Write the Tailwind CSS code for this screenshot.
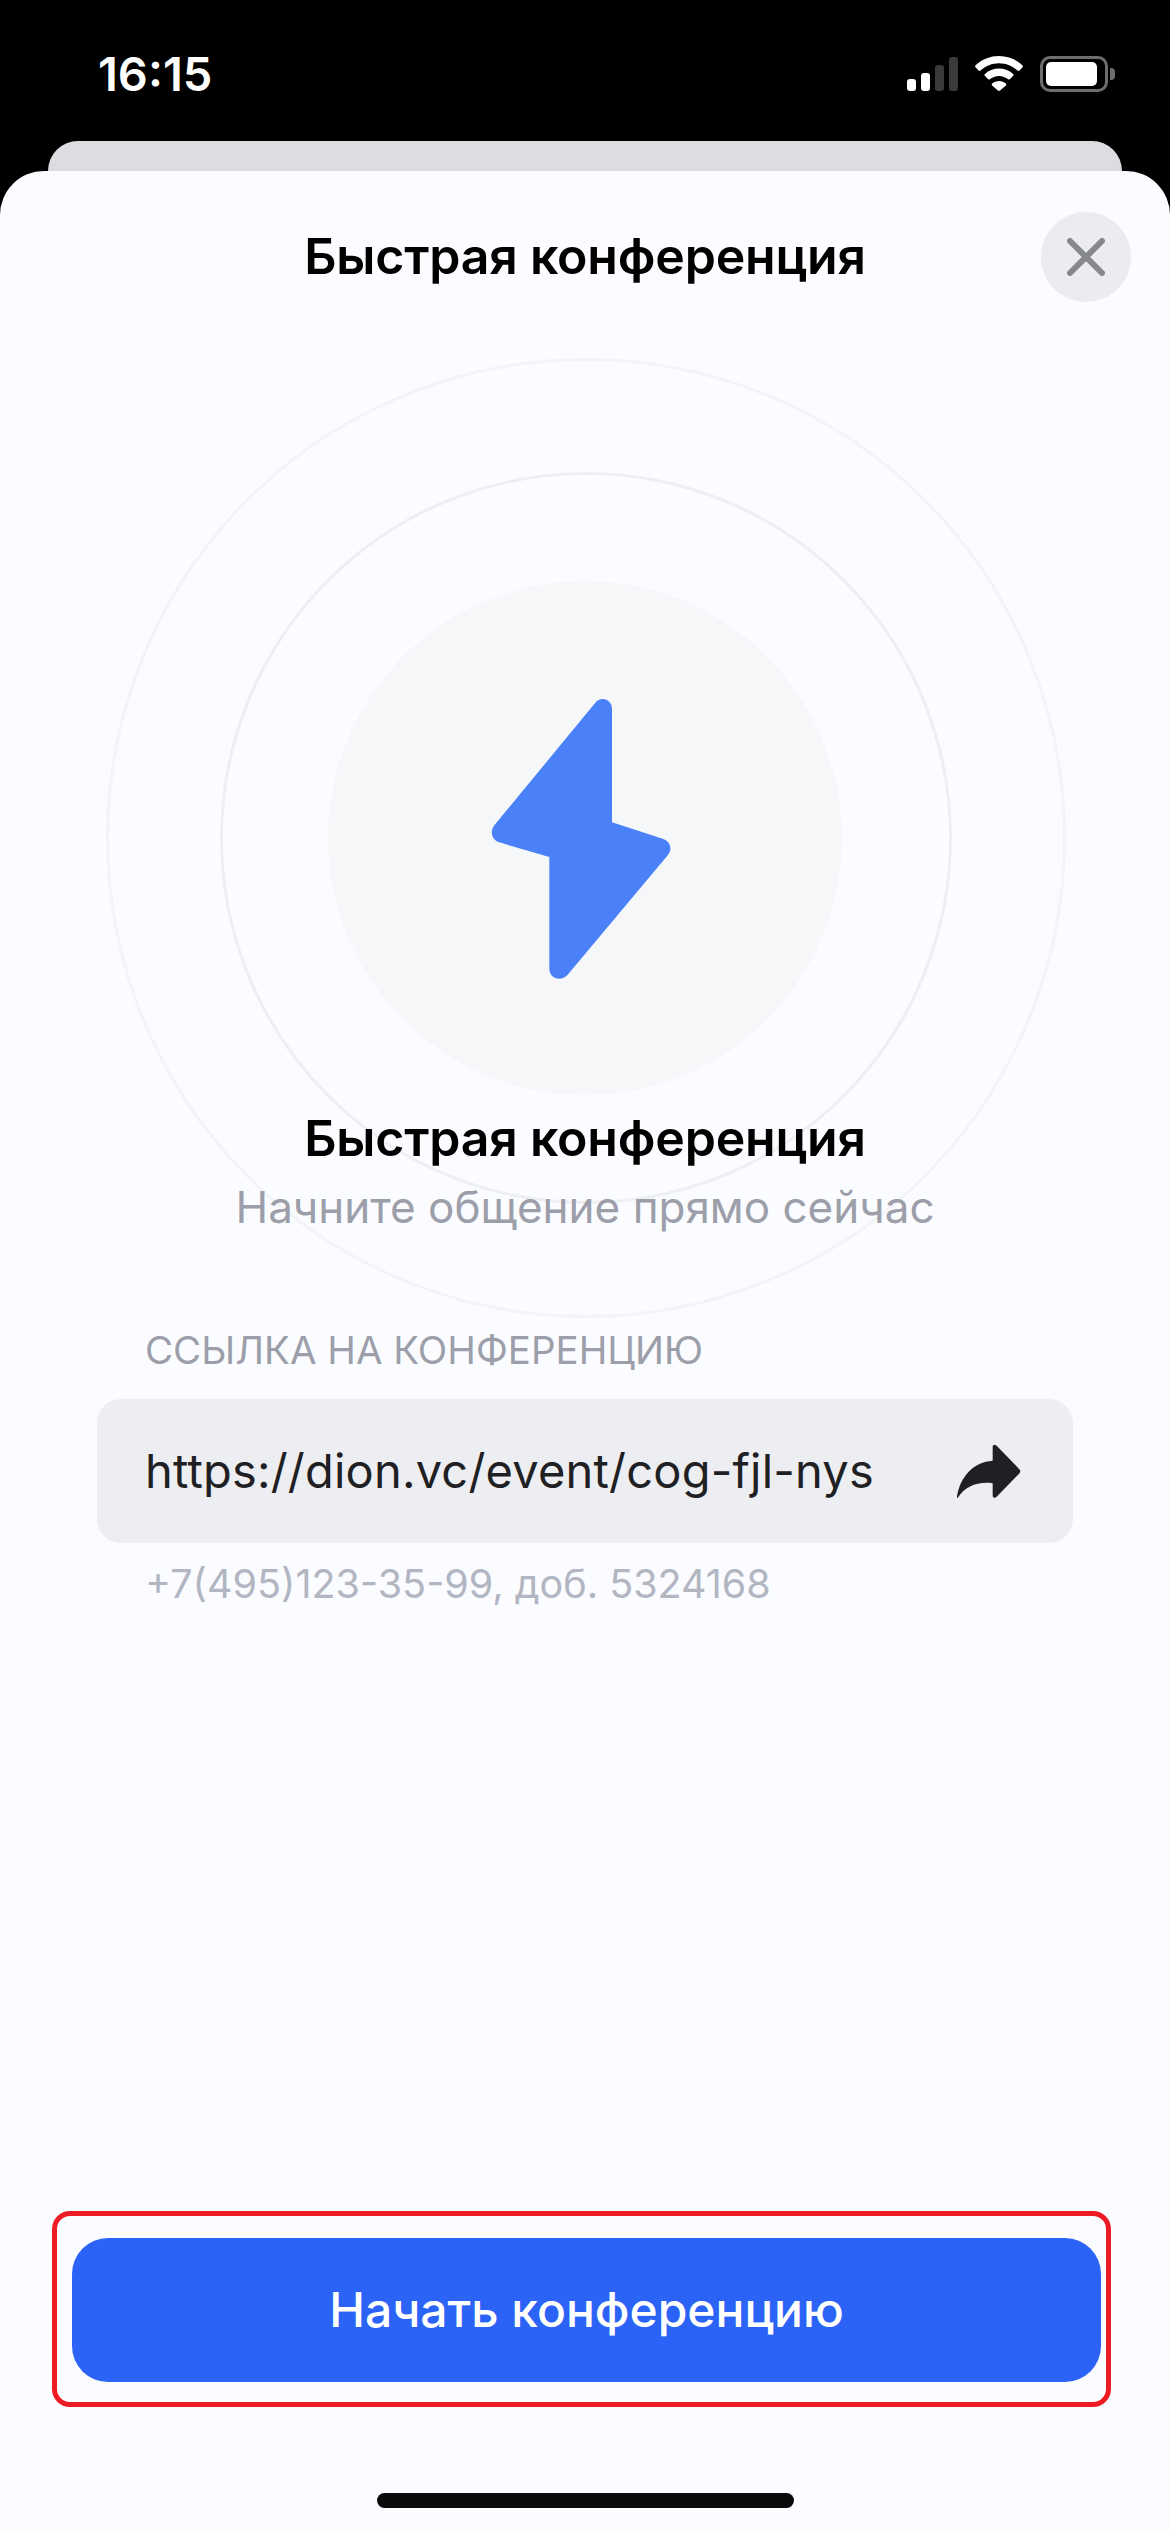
<!DOCTYPE html>
<html lang="ru">
<head>
  <meta charset="UTF-8" />
  <meta name="viewport" content="width=device-width, initial-scale=1" />
  <title>Быстрая конференция</title>
  <script src="https://cdn.jsdelivr.net/npm/@tailwindcss/browser@4"></script>
</head>
<body class="bg-black font-['Inter',sans-serif] w-[1170px] h-[2532px] overflow-hidden">
  <!-- status bar -->
  <div class="h-[141px] relative text-white">
    <span class="absolute left-[98px] top-[50px] text-[47px] leading-[48px] font-semibold">16:15</span>
    <div class="absolute left-[907px] top-[57px] flex items-end gap-[5px] h-[34px]">
      <div class="w-[9px] h-[12px] rounded-[3px] bg-white"></div>
      <div class="w-[9px] h-[18px] rounded-[3px] bg-white"></div>
      <div class="w-[9px] h-[26px] rounded-[3px] bg-[#3a3a3c]"></div>
      <div class="w-[9px] h-[34px] rounded-[3px] bg-[#3a3a3c]"></div>
    </div>
    <svg class="absolute left-[975px] top-[56px]" width="48" height="35" viewBox="0 0 48 35">
      <path d="M24 0C15 0 6.900 3.400 .6 9.200c-.7.6-.7 1.400-.1 2l3 3.300c.6.600 1.400.6 2 .1C10.500 10 17 7.300 24 7.300s13.500 2.700 18.500 7.300c.6.500 1.400.5 2-.1l3-3.300c.6-.6.600-1.400-.1-2C41.100 3.400 33 0 24 0z" fill="#fff"/>
      <path d="M24 12.500c-5.400 0-10.300 2-14.100 5.400-.6.500-.6 1.300-.1 1.900l3.100 3.300c.5.600 1.300.6 1.900.2 2.500-2 5.700-3.300 9.200-3.300s6.700 1.300 9.200 3.300c.6.400 1.400.4 1.900-.2l3.100-3.300c.5-.6.500-1.400-.1-1.900-3.800-3.400-8.700-5.400-14.100-5.400z" fill="#fff"/>
      <path d="M24 25c-2.600 0-5 .9-6.800 2.500-.6.500-.6 1.300-.1 1.900l5.800 5.100c.6.600 1.600.6 2.200 0l5.800-5.100c.5-.6.500-1.400-.1-1.900C29 25.900 26.600 25 24 25z" fill="#fff"/>
    </svg>
    <div class="absolute left-[1040px] top-[56px] w-[68px] h-[36px] rounded-[10px] border-[3px] border-[#6e6e70] p-[3px]">
      <div class="w-[51px] h-full rounded-[5px] bg-white"></div>
    </div>
    <div class="absolute left-[1110px] top-[68px] w-[5px] h-[12px] rounded-r-[4px] bg-[#6e6e70]"></div>
  </div>

  <!-- card behind the sheet -->
  <div class="mx-[48px] w-[1074px] h-[60px] rounded-t-[30px] bg-[#dcdde0]"></div>

  <!-- sheet -->
  <div class="relative -mt-[30px] h-[2361px] rounded-t-[44px] bg-[#fbfcff] flex flex-col overflow-hidden">
    <!-- rings -->
    <div class="absolute left-[106px] top-[187px] w-[960px] h-[960px] rounded-full border-[3px] border-[#f3f4f7]"></div>
    <div class="absolute left-[220px] top-[301px] w-[732px] h-[732px] rounded-full border-[3px] border-[#eeeff3]"></div>

    <div class="relative h-[170px] flex items-center justify-center">
      <h1 class="text-[50px] leading-[60px] font-semibold tracking-[-0.2px] text-black">Быстрая конференция</h1>
      <button class="absolute left-[1041px] top-[41px] w-[90px] h-[90px] rounded-full bg-[#ebecef] flex items-center justify-center">
        <svg width="38" height="38" viewBox="0 0 38 38"><path d="M3 3l32 32M35 3L3 35" stroke="#86888e" stroke-width="6" stroke-linecap="round"/></svg>
      </button>
    </div>

    <div class="relative mt-[240px] w-[514px] h-[514px] mx-auto rounded-full bg-[#f6f7f9] flex items-center justify-center shrink-0">
      <svg class="-translate-x-[4px]" width="182" height="282" viewBox="92 80 546 846">
        <path d="M408 97C424 76 458 86 458 116L458 456 610 505C632 512 642 536 624 556L325 913C305 935 270 925 270 895L270 560 120 516C98 508 90 485 105 465Z" fill="#4a80f8"/>
      </svg>
    </div>

    <div class="relative text-center mt-[13px]">
      <h2 class="text-[50px] leading-[60px] font-semibold tracking-[-0.2px] text-black">Быстрая конференция</h2>
      <p class="mt-[9px] text-[44px] leading-[60px] text-[#9c9fa9]">Начните общение прямо сейчас</p>
    </div>

    <div class="relative mt-[91px] mx-[97px]">
      <div class="pl-[48px] text-[38.5px] leading-[44px] text-[#9c9fa9]">ССЫЛКА НА КОНФЕРЕНЦИЮ</div>
      <div class="mt-[27px] h-[144px] rounded-[24px] bg-[#edeef1] flex items-center justify-between pl-[48px] pr-[52px]">
        <span class="text-[47px] leading-[60px] tracking-[0.2px] text-[#1f2023]">https://dion.vc/event/cog-fjl-nys</span>
        <svg class="shrink-0" width="64" height="55" viewBox="85 128 192 164">
          <path d="M192 136C192 129 199 128 204 133L272 203C276 207 276 212 272 216L204 286C199 291 192 289 192 283L192 245C145 240 110 255 88 288C85 290 84 288 85 285C95 225 135 182 192 178Z" fill="#1f2023"/>
        </svg>
      </div>
      <div class="mt-[19px] pl-[48px] text-[39.5px] leading-[44px] text-[#b1b6c2]">+7(495)123-35-99, доб. 5324168</div>
    </div>

    <div class="mt-auto mb-[125px] ml-[52px] w-[1059px] h-[196px] rounded-[18px] border-[5px] border-[#ed1c24] px-[15px] pt-[22px]">
      <button class="w-[1029px] h-[144px] rounded-[36px] bg-[#2b63f6] text-white text-[48px] font-medium">Начать конференцию</button>
    </div>

    <div class="absolute left-[377px] top-[2322px] w-[417px] h-[15px] rounded-full bg-[#0b0b0b]"></div>
  </div>
</body>
</html>
